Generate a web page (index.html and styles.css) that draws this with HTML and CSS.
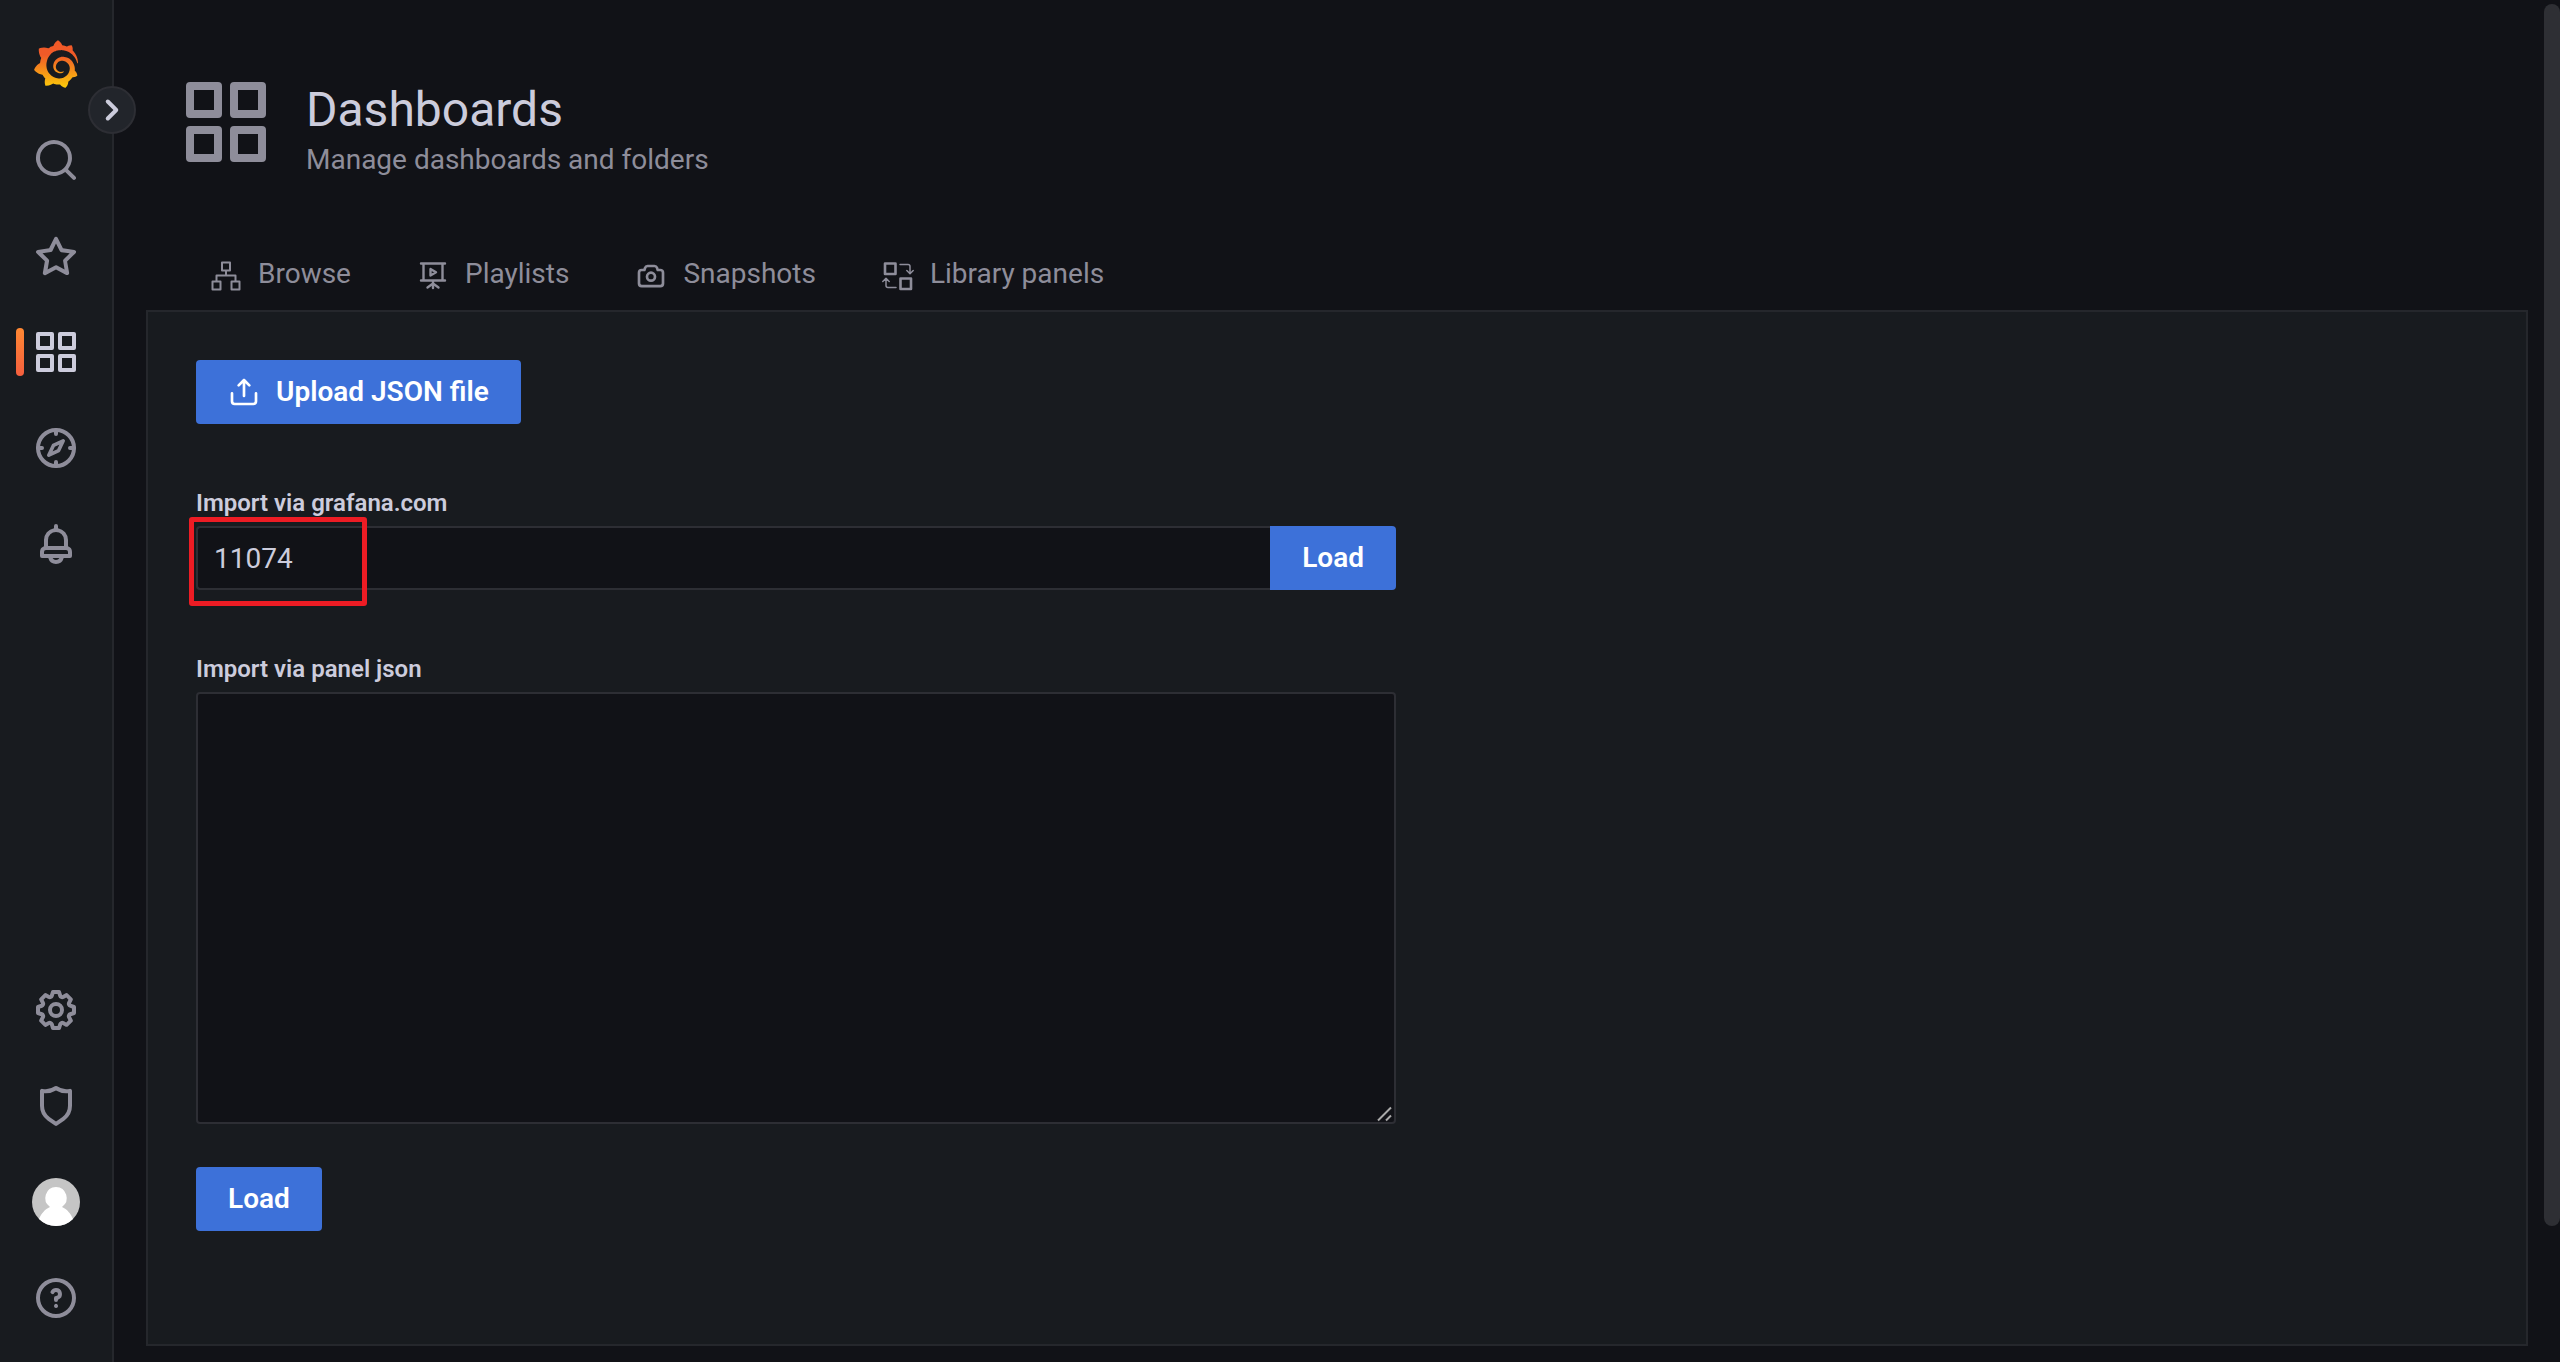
FILE: index.html
```html
<!DOCTYPE html>
<html lang="en">
<head>
<meta charset="utf-8">
<title>Dashboards - Grafana</title>
<link rel="stylesheet" href="styles.css">
</head>
<body>
<div class="app">
  <nav class="sidebar" aria-label="Main">
    <a class="side-link" href="#" aria-label="Home">
      <svg class="logo" viewBox="0 0 351 365"><defs><linearGradient id="flame" gradientUnits="userSpaceOnUse" x1="175.5" y1="445.5" x2="175.5" y2="114"><stop offset="0" stop-color="#fff100"/><stop offset="1" stop-color="#f05a28"/></linearGradient></defs><path fill="url(#flame)" d="M342,161.2c-0.6-6.1-1.6-13.1-3.6-20.9c-2-7.7-5-16.2-9.4-25c-4.4-8.8-10.1-17.9-17.5-26.8c-2.9-3.5-6.1-6.9-9.5-10.2c5.1-20.3-6.2-37.9-6.2-37.9c-19.5-1.2-31.9,6.1-36.5,9.4c-0.8-0.3-1.5-0.7-2.3-1c-3.3-1.3-6.7-2.6-10.3-3.7c-3.5-1.1-7.1-2.1-10.8-3c-3.7-0.9-7.4-1.6-11.2-2.2c-0.7-0.1-1.3-0.2-2-0.3c-8.5-27.2-32.9-38.6-32.9-38.6c-27.3,17.3-32.4,41.5-32.4,41.5s-0.1,0.5-0.3,1.4c-1.5,0.4-3,0.9-4.5,1.3c-2.1,0.6-4.2,1.4-6.2,2.2c-2.1,0.8-4.1,1.6-6.2,2.5c-4.1,1.8-8.2,3.8-12.2,6c-3.9,2.2-7.7,4.6-11.4,7.1c-0.5-0.2-1-0.4-1-0.4c-37.8-14.4-71.3,2.9-71.3,2.9c-3.1,40.2,15.1,65.5,18.7,70.1c-0.9,2.5-1.7,5-2.5,7.5c-2.8,9.1-4.9,18.4-6.2,28.1c-0.2,1.4-0.4,2.8-0.5,4.2C18.8,192.7,8.5,228,8.5,228c29.1,33.5,63.1,35.6,63.1,35.6c0,0,0.1-0.1,0.1-0.1c4.3,7.7,9.3,15,14.9,21.9c2.4,2.9,4.8,5.6,7.4,8.3c-10.6,30.4,1.5,55.6,1.5,55.6c32.4,1.2,53.7-14.2,58.2-17.7c3.2,1.1,6.5,2.1,9.8,2.9c10,2.6,20.2,4.1,30.4,4.5c2.5,0.1,5.1,0.2,7.6,0.1l1.2,0l0.8,0l1.6,0l1.6-0.1l0,0.1c15.3,21.8,42.1,24.9,42.1,24.9c19.1-20.1,20.2-40.1,20.2-44.4l0,0c0,0,0-0.1,0-0.3c0-0.4,0-0.6,0-0.6l0,0c0-0.3,0-0.6,0-0.9c4-2.8,7.8-5.8,11.4-9.1c7.6-6.9,14.3-14.8,19.9-23.3c0.5-0.8,1-1.6,1.5-2.4c21.6,1.2,36.9-13.4,36.9-13.4c-3.6-22.5-16.4-33.5-19.1-35.6l0,0c0,0-0.1-0.1-0.3-0.2c-0.2-0.1-0.2-0.2-0.2-0.2c0,0,0,0,0,0c-0.1-0.1-0.3-0.2-0.5-0.3c0.1-1.4,0.2-2.7,0.3-4.1c0.2-2.4,0.2-4.9,0.2-7.3l0-1.8l0-0.9l0-0.5c0-0.6,0-0.4,0-0.6l-0.1-1.5l-0.1-2c0-0.7-0.1-1.3-0.2-1.9c-0.1-0.6-0.1-1.3-0.2-1.9l-0.2-1.9l-0.3-1.9c-0.4-2.5-0.8-4.9-1.4-7.4c-2.3-9.7-6.1-18.9-11-27.2c-5-8.3-11.2-15.6-18.3-21.8c-7-6.2-14.9-11.2-23.1-14.9c-8.3-3.7-16.9-6.1-25.5-7.2c-4.3-0.6-8.6-0.8-12.9-0.7l-1.6,0l-0.4,0c-0.1,0-0.6,0-0.5,0l-0.7,0l-1.6,0.1c-0.6,0-1.2,0.1-1.7,0.1c-2.2,0.2-4.4,0.5-6.5,0.9c-8.6,1.6-16.7,4.7-23.8,9c-7.1,4.3-13.3,9.6-18.3,15.6c-5,6-8.9,12.7-11.6,19.6c-2.7,6.9-4.2,14.1-4.6,21c-0.1,1.7-0.1,3.5-0.1,5.2c0,0.4,0,0.9,0,1.3l0.1,1.4c0.1,0.8,0.1,1.7,0.2,2.5c0.3,3.5,1,6.9,1.9,10.1c1.9,6.5,4.9,12.4,8.6,17.4c3.7,5,8.2,9.1,12.9,12.4c4.7,3.2,9.8,5.5,14.8,7c5,1.5,10,2.1,14.7,2.1c0.6,0,1.2,0,1.7,0c0.3,0,0.6,0,0.9,0c0.3,0,0.6,0,0.9-0.1c0.5,0,1-0.1,1.5-0.1c0.1,0,0.3,0,0.4-0.1l0.5-0.1c0.3,0,0.6-0.1,0.9-0.1c0.6-0.1,1.1-0.2,1.7-0.3c0.6-0.1,1.1-0.2,1.6-0.4c1.1-0.2,2.1-0.6,3.1-0.9c2-0.7,4-1.5,5.7-2.4c1.8-0.9,3.4-2,5-3c0.4-0.3,0.9-0.6,1.3-1c1.6-1.3,1.9-3.7,0.6-5.3c-1.1-1.4-3.1-1.8-4.7-0.9c-0.4,0.2-0.8,0.4-1.2,0.6c-1.4,0.7-2.8,1.3-4.3,1.8c-1.5,0.5-3.1,0.9-4.7,1.2c-0.8,0.1-1.6,0.2-2.5,0.3c-0.4,0-0.8,0.1-1.3,0.1c-0.4,0-0.9,0-1.2,0c-0.4,0-0.8,0-1.2,0c-0.5,0-1,0-1.5-0.1c0,0-0.3,0-0.1,0l-0.2,0l-0.3,0c-0.2,0-0.5,0-0.7-0.1c-0.5-0.1-0.9-0.1-1.4-0.2c-3.7-0.5-7.4-1.6-10.9-3.2c-3.6-1.6-7-3.8-10.1-6.6c-3.1-2.8-5.8-6.1-7.9-9.9c-2.1-3.8-3.6-8-4.3-12.4c-0.3-2.2-0.5-4.5-0.4-6.7c0-0.6,0.1-1.2,0.1-1.8c0,0.2,0-0.1,0-0.1l0-0.2l0-0.5c0-0.3,0.1-0.6,0.1-0.9c0.1-1.2,0.3-2.4,0.5-3.6c1.7-9.6,6.5-19,13.9-26.1c1.9-1.8,3.9-3.4,6-4.9c2.1-1.5,4.4-2.8,6.8-3.9c2.4-1.1,4.8-2,7.4-2.7c2.5-0.7,5.1-1.1,7.8-1.4c1.3-0.1,2.6-0.2,4-0.2c0.4,0,0.6,0,0.9,0l1.1,0l0.7,0c0.3,0,0,0,0.1,0l0.3,0l1.1,0.1c2.9,0.2,5.7,0.6,8.5,1.3c5.6,1.2,11.1,3.3,16.2,6.1c10.2,5.7,18.9,14.5,24.2,25.1c2.7,5.3,4.6,11,5.5,16.9c0.2,1.5,0.4,3,0.5,4.5l0.1,1.1l0.1,1.1c0,0.4,0,0.8,0,1.1c0,0.4,0,0.8,0,1.1l0,1l0,1.1c0,0.7-0.1,1.9-0.1,2.6c-0.1,1.6-0.3,3.3-0.5,4.9c-0.2,1.6-0.5,3.2-0.8,4.8c-0.3,1.6-0.7,3.2-1.1,4.7c-0.8,3.1-1.8,6.2-3,9.3c-2.4,6-5.6,11.8-9.4,17.1c-7.7,10.6-18.2,19.2-30.2,24.7c-6,2.7-12.3,4.7-18.8,5.7c-3.2,0.6-6.5,0.9-9.8,1l-0.6,0l-0.5,0l-1.1,0l-1.6,0l-0.8,0c0.4,0-0.1,0-0.1,0l-0.3,0c-1.8,0-3.5-0.1-5.3-0.3c-7-0.5-13.9-1.8-20.7-3.7c-6.7-1.9-13.2-4.6-19.4-7.8c-12.3-6.6-23.4-15.6-32-26.5c-4.3-5.4-8.1-11.3-11.2-17.4c-3.1-6.1-5.6-12.6-7.4-19.1c-1.8-6.6-2.9-13.3-3.4-20.1l-0.1-1.3l0-0.3l0-0.3l0-0.6l0-1.1l0-0.3l0-0.4l0-0.8l0-1.6l0-0.3c0,0,0,0.1,0-0.1l0-0.6c0-0.8,0-1.7,0-2.5c0.1-3.3,0.4-6.8,0.8-10.2c0.4-3.4,1-6.9,1.7-10.3c0.7-3.4,1.5-6.8,2.5-10.2c1.9-6.7,4.3-13.2,7.1-19.3c5.7-12.2,13.1-23.1,22-31.8c2.2-2.2,4.5-4.2,6.9-6.2c2.4-1.9,4.9-3.7,7.5-5.4c2.5-1.7,5.2-3.2,7.9-4.6c1.3-0.7,2.7-1.4,4.1-2c0.7-0.3,1.4-0.6,2.1-0.9c0.7-0.3,1.4-0.6,2.1-0.9c2.8-1.2,5.7-2.2,8.7-3.1c0.7-0.2,1.5-0.4,2.2-0.7c0.7-0.2,1.5-0.4,2.2-0.6c1.5-0.4,3-0.8,4.5-1.1c0.7-0.2,1.5-0.3,2.3-0.5c0.8-0.2,1.5-0.3,2.3-0.5c0.8-0.1,1.5-0.3,2.3-0.4l1.1-0.2l1.2-0.2c0.8-0.1,1.5-0.2,2.3-0.3c0.9-0.1,1.7-0.2,2.6-0.3c0.7-0.1,1.9-0.2,2.6-0.3c0.5-0.1,1.1-0.1,1.6-0.2l1.1-0.1l0.5-0.1l0.6,0c0.9-0.1,1.7-0.1,2.6-0.2l1.3-0.1c0,0,0.5,0,0.1,0l0.3,0l0.6,0c0.7,0,1.5-0.1,2.2-0.1c2.9-0.1,5.9-0.1,8.8,0c5.8,0.2,11.5,0.9,17,1.9c11.1,2.1,21.5,5.6,31,10.3c9.5,4.6,17.9,10.3,25.3,16.5c0.5,0.4,0.9,0.8,1.4,1.2c0.4,0.4,0.9,0.8,1.3,1.2c0.9,0.8,1.7,1.6,2.6,2.4c0.9,0.8,1.7,1.6,2.5,2.4c0.8,0.8,1.6,1.6,2.4,2.5c3.1,3.3,6,6.6,8.6,10c5.2,6.7,9.4,13.5,12.7,19.9c0.2,0.4,0.4,0.8,0.6,1.2c0.2,0.4,0.4,0.8,0.6,1.2c0.4,0.8,0.8,1.6,1.1,2.4c0.4,0.8,0.7,1.5,1.1,2.3c0.3,0.8,0.7,1.5,1,2.3c1.2,3,2.4,5.9,3.3,8.6c1.5,4.4,2.6,8.3,3.5,11.7c0.3,1.4,1.6,2.3,3,2.1c1.5-0.1,2.6-1.3,2.6-2.8C342.6,170.4,342.5,166.1,342,161.2z"/></svg>
    </a>
    <a class="side-link" href="#" aria-label="Search">
      <svg class="icon" viewBox="0 0 24 24"><path d="M21.71,20.29,18,16.61A9,9,0,1,0,16.61,18l3.68,3.68a1,1,0,0,0,1.42,0A1,1,0,0,0,21.71,20.29ZM11,18a7,7,0,1,1,7-7A7,7,0,0,1,11,18Z"/></svg>
    </a>
    <a class="side-link" href="#" aria-label="Starred">
      <svg class="icon" viewBox="0 0 24 24"><path d="M22,9.67A1,1,0,0,0,21.14,9l-5.69-.83L12.9,3a1,1,0,0,0-1.8,0L8.55,8.16,2.86,9a1,1,0,0,0-.81.68,1,1,0,0,0,.25,1l4.13,4-1,5.68A1,1,0,0,0,6.9,21.44L12,18.77l5.1,2.67a.93.93,0,0,0,.46.12,1,1,0,0,0,.59-.19,1,1,0,0,0,.4-1l-1-5.68,4.13-4A1,1,0,0,0,22,9.67Zm-6.15,4a1,1,0,0,0-.29.88l.72,4.2-3.76-2a1.06,1.06,0,0,0-.94,0l-3.76,2,.72-4.2a1,1,0,0,0-.29-.88l-3-3,4.21-.61a1,1,0,0,0,.76-.55L12,5.7l1.88,3.82a1,1,0,0,0,.76.55l4.21.61Z"/></svg>
    </a>
    <a class="side-link side-link-active" href="#" aria-label="Dashboards" aria-current="page">
      <svg class="icon" viewBox="0 0 24 24"><path class="line" stroke-width="2" d="M3,3h7v7H3ZM14,3h7v7h-7ZM3,14h7v7H3ZM14,14h7v7h-7Z"/></svg>
    </a>
    <a class="side-link" href="#" aria-label="Explore">
      <svg class="icon" viewBox="0 0 24 24"><g class="line" stroke-width="2"><circle cx="12" cy="12" r="9"/><path d="M12,3v2M12,19v2M3,12h2M19,12h2" stroke-linecap="round"/></g><path class="line" stroke-width="1.8" d="M15.6,8.4l-4.9,2.3L8.4,15.6l4.9-2.3Z"/></svg>
    </a>
    <a class="side-link" href="#" aria-label="Alerting">
      <svg class="icon" viewBox="0 0 24 24"><path d="M18,13.18V10a6,6,0,0,0-5-5.91V3a1,1,0,0,0-2,0V4.09A6,6,0,0,0,6,10v3.18A3,3,0,0,0,4,16v2a1,1,0,0,0,1,1H8.14a4,4,0,0,0,7.72,0H19a1,1,0,0,0,1-1V16A3,3,0,0,0,18,13.18ZM8,10a4,4,0,0,1,8,0v3H8Zm4,10a2,2,0,0,1-1.72-1h3.44A2,2,0,0,1,12,20Zm6-3H6V16a1,1,0,0,1,1-1H17a1,1,0,0,1,1,1Z"/></svg>
    </a>
    <a class="side-link side-link-bottom" href="#" aria-label="Configuration">
      <svg class="icon" viewBox="0 0 24 24"><path d="M21.32,9.55l-1.89-.63.89-1.78A1,1,0,0,0,20.13,6L18,3.87a1,1,0,0,0-1.15-.19l-1.78.89-.63-1.89A1,1,0,0,0,13.5,2h-3a1,1,0,0,0-.95.68L8.92,4.57,7.14,3.68A1,1,0,0,0,6,3.87L3.87,6a1,1,0,0,0-.19,1.15l.89,1.78-1.89.63A1,1,0,0,0,2,10.5v3a1,1,0,0,0,.68.95l1.89.63-.89,1.78A1,1,0,0,0,3.87,18L6,20.13a1,1,0,0,0,1.15.19l1.78-.89.63,1.89a1,1,0,0,0,.95.68h3a1,1,0,0,0,.95-.68l.63-1.89,1.78.89A1,1,0,0,0,18,20.13L20.13,18a1,1,0,0,0,.19-1.15l-.89-1.78,1.89-.63A1,1,0,0,0,22,13.5v-3A1,1,0,0,0,21.32,9.55ZM20,12.78l-1.2.4A2,2,0,0,0,17.64,16l.57,1.14-1.1,1.1L16,17.64a2,2,0,0,0-2.79,1.16l-.4,1.2H11.22l-.4-1.2A2,2,0,0,0,8,17.64l-1.14.57-1.1-1.1L6.36,16A2,2,0,0,0,5.2,13.18L4,12.78V11.22l1.2-.4A2,2,0,0,0,6.36,8L5.79,6.89l1.1-1.1L8,6.36A2,2,0,0,0,10.82,5.2l.4-1.2h1.56l.4,1.2A2,2,0,0,0,16,6.36l1.14-.57,1.1,1.1L17.64,8a2,2,0,0,0,1.16,2.79l1.2.4ZM12,8a4,4,0,1,0,4,4A4,4,0,0,0,12,8Zm0,6a2,2,0,1,1,2-2A2,2,0,0,1,12,14Z"/></svg>
    </a>
    <a class="side-link" href="#" aria-label="Server admin">
      <svg class="icon" viewBox="0 0 24 24"><path d="M19.63,3.65a1,1,0,0,0-.84-.2,8,8,0,0,1-6.22-1.27,1,1,0,0,0-1.14,0A8,8,0,0,1,5.21,3.45a1,1,0,0,0-.84.2A1,1,0,0,0,4,4.43v7.45a9,9,0,0,0,3.77,7.33l3.65,2.6a1,1,0,0,0,1.16,0l3.65-2.6A9,9,0,0,0,20,11.88V4.43A1,1,0,0,0,19.63,3.65ZM18,11.88a7,7,0,0,1-2.93,5.7L12,19.77,8.93,17.58A7,7,0,0,1,6,11.88V5.58a10,10,0,0,0,6-1.39,10,10,0,0,0,6,1.39Z"/></svg>
    </a>
    <a class="side-link" href="#" aria-label="Profile">
      <svg class="icon avatar" viewBox="0 0 48 48"><path fill="#c5c5c5" d="M0,0h48v48H0Z"/><path fill="#fff" d="M24,9a11,11,0,0,1,6,20c5,2,9,7,11,12V48H7V41c2-5,6-10,11-12A11,11,0,0,1,24,9Z"/></svg>
    </a>
    <a class="side-link" href="#" aria-label="Help">
      <svg class="icon" viewBox="0 0 24 24"><path d="M11.29,15.29a1.58,1.58,0,0,0-.12.15.76.76,0,0,0-.09.18.64.64,0,0,0-.06.18,1.36,1.36,0,0,0,0,.2.84.84,0,0,0,.08.38.9.9,0,0,0,.54.54.94.94,0,0,0,.76,0,.9.9,0,0,0,.54-.54A1,1,0,0,0,13,16a1,1,0,0,0-.29-.71A1,1,0,0,0,11.29,15.29ZM12,2A10,10,0,1,0,22,12,10,10,0,0,0,12,2Zm0,18a8,8,0,1,1,8-8A8,8,0,0,1,12,20ZM12,7A3,3,0,0,0,9.4,8.5a1,1,0,1,0,1.73,1A1,1,0,0,1,12,9a1,1,0,0,1,0,2,1,1,0,0,0-1,1v1a1,1,0,0,0,2,0v-.18A3,3,0,0,0,12,7Z"/></svg>
    </a>
    <button class="sidebar-toggle" type="button" aria-label="Expand menu">
      <svg class="icon" viewBox="0 0 24 24"><path d="M14.83,11.29,10.59,7.05a1,1,0,0,0-1.42,0,1,1,0,0,0,0,1.41L12.71,12,9.17,15.54a1,1,0,0,0,0,1.41,1,1,0,0,0,.71.29,1,1,0,0,0,.71-.29l4.24-4.24A1,1,0,0,0,14.83,11.29Z"/></svg>
    </button>
  </nav>

  <main class="page">
    <header class="page-header">
      <svg class="page-icon" viewBox="0 0 24 24"><path class="line" stroke-width="2" d="M3,3h7v7H3ZM14,3h7v7h-7ZM3,14h7v7H3ZM14,14h7v7h-7Z"/></svg>
      <div class="page-heading">
        <h1 class="page-title">Dashboards</h1>
        <p class="page-subtitle">Manage dashboards and folders</p>
      </div>
    </header>

    <nav class="tabs" aria-label="Dashboards sections">
      <a class="tab" href="#">
        <svg class="tab-icon" viewBox="0 0 32 32"><path class="line" stroke-width="2" d="M12,2.5h8v8h-8ZM2.5,21.5h8v8h-8ZM21.5,21.5h8v8h-8ZM16,10.5v5M6.5,21.5v-6h19v6"/></svg>
        Browse
      </a>
      <a class="tab" href="#">
        <svg class="tab-icon" viewBox="0 0 32 32"><path class="line" stroke-width="2.4" stroke-linecap="round" d="M4,3.5H28M4,20.5H28M6.5,3.5v17M25.5,3.5v17M16,20.5v7.5M16,23.5l-5.5,4M16,23.5l5.5,4M13.500,9v6.500l5.500-3.200Z"/></svg>
        Playlists
      </a>
      <a class="tab" href="#">
        <svg class="tab-icon" viewBox="0 0 24 24"><path d="M19,6.5H17.72l-.32-1a3,3,0,0,0-2.84-2H9.44A3,3,0,0,0,6.6,5.55l-.32,1H5a3,3,0,0,0-3,3v8a3,3,0,0,0,3,3H19a3,3,0,0,0,3-3v-8A3,3,0,0,0,19,6.5Zm1,11a1,1,0,0,1-1,1H5a1,1,0,0,1-1-1v-8a1,1,0,0,1,1-1H7a1,1,0,0,0,1-.68l.54-1.64a1,1,0,0,1,.95-.68h5.12a1,1,0,0,1,.95.68l.54,1.64A1,1,0,0,0,17,8.5h2a1,1,0,0,1,1,1Zm-8-9a4,4,0,1,0,4,4A4,4,0,0,0,12,8.5Zm0,6a2,2,0,1,1,2-2A2,2,0,0,1,12,14.5Z"/></svg>
        Snapshots
      </a>
      <a class="tab" href="#">
        <svg class="tab-icon" viewBox="0 0 32 32"><path class="line" stroke-width="2.6" d="M3,3.5h10.5v10.5H3ZM18.5,18.5h10.5v10.5h-10.5Z"/><path class="line" stroke-width="1.5" stroke-linecap="round" d="M18,4.5h8a2,2,0,0,1,2,2v7M24.8,10.5l3.2,3.2,3.2-3.2M14,27.5H6a2,2,0,0,1-2-2v-7M.8,21.5l3.2-3.2,3.2,3.2"/></svg>
        Library panels
      </a>
    </nav>

    <section class="panel">
      <button class="button upload" type="button">
        <svg class="button-icon" viewBox="0 0 24 24"><path d="M8.71,7.71L11,5.41V15a1,1,0,0,0,2,0V5.41l2.29,2.3a1,1,0,0,0,1.42,0,1,1,0,0,0,0-1.42l-4-4a1,1,0,0,0-.33-.21,1,1,0,0,0-.76,0,1,1,0,0,0-.33.21l-4,4A1,1,0,1,0,8.71,7.71ZM21,12a1,1,0,0,0-1,1v6a1,1,0,0,1-1,1H5a1,1,0,0,1-1-1V13a1,1,0,0,0-2,0v6a3,3,0,0,0,3,3H19a3,3,0,0,0,3-3V13A1,1,0,0,0,21,12Z"/></svg>
        Upload JSON file
      </button>

      <form class="form">
        <label class="label" for="dashboard-id">Import via grafana.com</label>
        <div class="input-row">
          <input class="input" id="dashboard-id" type="text" value="11074">
          <button class="button button-attached" type="button">Load</button>
          <span class="highlight"></span>
        </div>
      </form>

      <form class="form">
        <label class="label" for="dashboard-json">Import via panel json</label>
        <div class="textarea-wrap">
          <textarea class="textarea" id="dashboard-json"></textarea>
          <svg class="grip" viewBox="0 0 16 16"><path d="M1,14.5L14,1.5M9,14.5L14,9.5" fill="none" stroke="#aaa" stroke-width="2"/></svg>
        </div>
        <button class="button" type="button">Load</button>
      </form>
    </section>
    <div class="scroll-thumb"></div>
  </main>
</div>
</body>
</html>
```

FILE: styles.css
```css
:root {
  --canvas: #111217;
  --surface: #181b1f;
  --border: #25272c;
  --input-border: #2d2e34;
  --text: #ccccdc;
  --muted: #8e8d9a;
  --primary: #3d71d9;
}

* { box-sizing: border-box; }

body {
  margin: 0;
  background: var(--canvas);
  color: var(--text);
  font: 400 28px/32px Roboto, "Liberation Sans", sans-serif;
}

button, input, textarea { font: inherit; }

svg {
  display: block;
  flex: none;
  fill: currentColor;
}

.line {
  fill: none;
  stroke: currentColor;
  stroke-linejoin: round;
}

.app {
  display: flex;
  min-height: 100vh;
}

/* Sidebar */

.sidebar {
  position: relative;
  display: flex;
  flex-direction: column;
  flex: none;
  width: 114px;
  padding: 16px 0;
  background: var(--surface);
  border-right: 2px solid var(--border);
}

.side-link {
  position: relative;
  display: flex;
  align-items: center;
  justify-content: center;
  height: 96px;
  color: var(--muted);
}

.side-link-active { color: var(--text); }

.side-link-active::before {
  content: "";
  position: absolute;
  top: 24px;
  left: 16px;
  width: 8px;
  height: 48px;
  border-radius: 4px;
  background: linear-gradient(#ff8833, #f55f3e);
}

.side-link-bottom { margin-top: auto; }

.icon {
  width: 48px;
  height: 48px;
}

.logo {
  width: 46px;
  height: 48px;
}

.avatar { border-radius: 50%; }

.sidebar-toggle {
  position: absolute;
  top: 86px;
  right: -24px;
  display: flex;
  align-items: center;
  justify-content: center;
  width: 48px;
  height: 48px;
  padding: 0;
  border: 2px solid #2d2e34;
  border-radius: 50%;
  background: #22252b;
  color: var(--text);
}

/* Page */

.page {
  position: relative;
  display: flex;
  flex: 1;
  flex-direction: column;
  padding: 74px 32px 16px;
}

.page-header {
  display: flex;
  gap: 32px;
  padding: 0 32px;
}

.page-icon {
  width: 96px;
  height: 96px;
  color: var(--muted);
}

.page-heading { padding-top: 8px; }

.page-title {
  margin: 0;
  font-size: 48px;
  font-weight: 400;
  line-height: 56px;
}

.page-subtitle {
  margin: 0;
  color: var(--muted);
  line-height: 44px;
}

.tabs {
  display: flex;
  gap: 2px;
  margin-top: 76px;
  padding: 0 32px;
}

.tab {
  display: flex;
  gap: 16px;
  padding: 0 32px 18px;
  color: var(--muted);
  text-decoration: none;
}

.tab-icon {
  width: 32px;
  height: 32px;
  margin-top: 2px;
}

.panel {
  flex: 1;
  padding: 48px;
  border: 2px solid var(--border);
  background: var(--surface);
}

/* Form */

.button {
  display: flex;
  align-items: center;
  gap: 16px;
  height: 64px;
  padding: 0 32px;
  border: 0;
  border-radius: 4px;
  background: var(--primary);
  color: #fff;
  font-weight: 600;
  white-space: nowrap;
}

.button-icon {
  width: 32px;
  height: 32px;
}

.upload { margin-bottom: 64px; }

.form {
  max-width: 1200px;
  margin-bottom: 64px;
}

.label {
  display: block;
  margin-bottom: 8px;
  font-size: 24px;
  font-weight: 600;
  line-height: 30px;
}

.input-row {
  position: relative;
  display: flex;
}

.input {
  flex: 1;
  min-width: 0;
  height: 64px;
  padding: 0 16px;
  border: 2px solid var(--input-border);
  border-right: 0;
  border-radius: 4px 0 0 4px;
  background: var(--canvas);
  color: var(--text);
}

.button-attached { border-radius: 0 4px 4px 0; }

.highlight {
  position: absolute;
  top: -9px;
  left: -7px;
  width: 178px;
  height: 89px;
  border: 5px solid #ed1c24;
  border-radius: 3px;
  pointer-events: none;
}

.textarea-wrap {
  position: relative;
  margin-bottom: 43px;
}

.textarea {
  display: block;
  width: 100%;
  height: 432px;
  padding: 8px 16px;
  border: 2px solid var(--input-border);
  border-radius: 4px;
  background: var(--canvas);
  color: var(--text);
  resize: none;
}

.grip {
  position: absolute;
  right: 3px;
  bottom: 2px;
  width: 16px;
  height: 16px;
}

.scroll-thumb {
  position: absolute;
  top: 4px;
  right: 0;
  bottom: 10%;
  width: 16px;
  border-radius: 8px;
  background: #2e2f34;
}
```
